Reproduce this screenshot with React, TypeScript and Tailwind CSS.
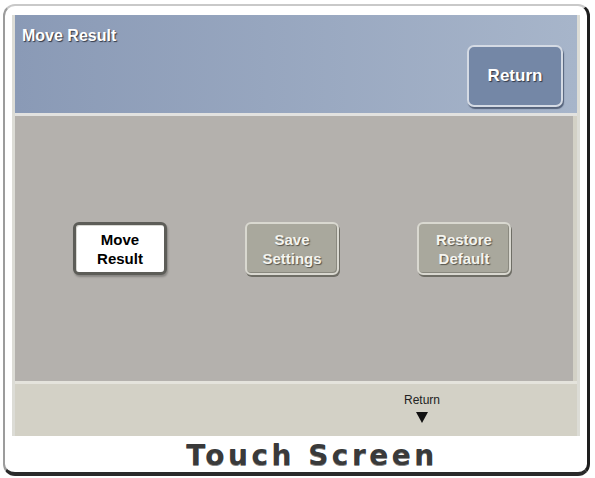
import React from 'react';

const font = { fontFamily: '"Liberation Sans", Arial, sans-serif' };

function PanelButton({
  lines,
  variant,
}: {
  lines: string[];
  variant: 'active' | 'muted';
}) {
  const base =
    'w-[94px] h-[53px] rounded-[6px] flex flex-col items-center justify-center text-[15px] font-bold leading-[19px]';
  if (variant === 'active') {
    return (
      <div className={`${base} bg-white text-black border-[3px] border-[#5d5d58] shadow-[inset_1px_1px_0_#d9d9d4,1px_2px_2px_rgba(0,0,0,0.25)]`}>
        {lines.map((l) => (
          <span key={l}>{l}</span>
        ))}
      </div>
    );
  }
  return (
    <div className={`${base} bg-[#a9a89d] text-[#f4f4ef] border-2 border-[#d9d8d0] shadow-[1px_2px_0_#6f6e66,inset_-1px_-1px_0_#8a897f] [text-shadow:1px_1px_1px_#55544c]`}>
      {lines.map((l) => (
        <span key={l}>{l}</span>
      ))}
    </div>
  );
}

export default function App() {
  return (
    <div className="w-[595px] h-[478px] bg-white pt-[4px] pl-[3px] pr-[5px] pb-[2px]" style={font}>
      {/* outer bezel */}
      <div className="w-full h-full rounded-[12px] bg-white border-l-2 border-t-2 border-l-[#9c9c9c] border-t-[#c9c9c9] border-r-[3px] border-b-[4px] border-r-[#1e1e1e] border-b-[#2a2a2a] flex flex-col pt-[9px] px-[7px]">
        <div className="flex flex-col border-x-[3px] border-x-[#dcdcd6] bg-[#d3d1c6]">
          {/* title bar */}
          <div className="h-[101px] bg-gradient-to-r from-[#8a9ab6] to-[#a7b5ca] relative border-b-[3px] border-b-[#e2e2e0]">
            <div className="absolute left-[7px] top-[9px] text-white text-[16px] font-bold [text-shadow:1px_1px_1px_#2f3645]">
              Move Result
            </div>
            <div className="absolute right-[14px] top-[30px] w-[96px] h-[62px] rounded-[7px] bg-[#7487a6] border-2 border-[#d4dae4] shadow-[1px_2px_1px_#55627a] flex items-center justify-center text-white text-[17px] font-bold [text-shadow:1px_1px_1px_#2f3645]">
              Return
            </div>
          </div>
          {/* main area */}
          <div className="h-[265px] bg-[#b4b1ad] mr-[4px] flex items-center pl-[58px] gap-[78px]">
            <PanelButton lines={['Move', 'Result']} variant="active" />
            <PanelButton lines={['Save', 'Settings']} variant="muted" />
            <PanelButton lines={['Restore', 'Default']} variant="muted" />
          </div>
          {/* soft key strip */}
          <div className="h-[55px] border-t-[3px] border-t-[#e4e3dc] flex">
            <div className="ml-[382px] w-[50px] flex flex-col items-center pt-[9px]">
              <span className="text-[12px] text-[#222] leading-[14px]">Return</span>
              <svg width="12" height="11" viewBox="0 0 12 11" className="mt-[5px]">
                <path d="M0 0 H12 L6 11 Z" fill="#111" />
              </svg>
            </div>
          </div>
        </div>
        <div className="flex-1 flex items-center justify-center pt-[3px]">
          <span className="text-[28px] font-bold tracking-[3.5px] text-[#3a3a3a] [text-shadow:0_1px_0_#888] leading-none ml-[32px]" style={{ fontFamily: '"DejaVu Sans", sans-serif' }}>
            Touch Screen
          </span>
        </div>
      </div>
    </div>
  );
}
